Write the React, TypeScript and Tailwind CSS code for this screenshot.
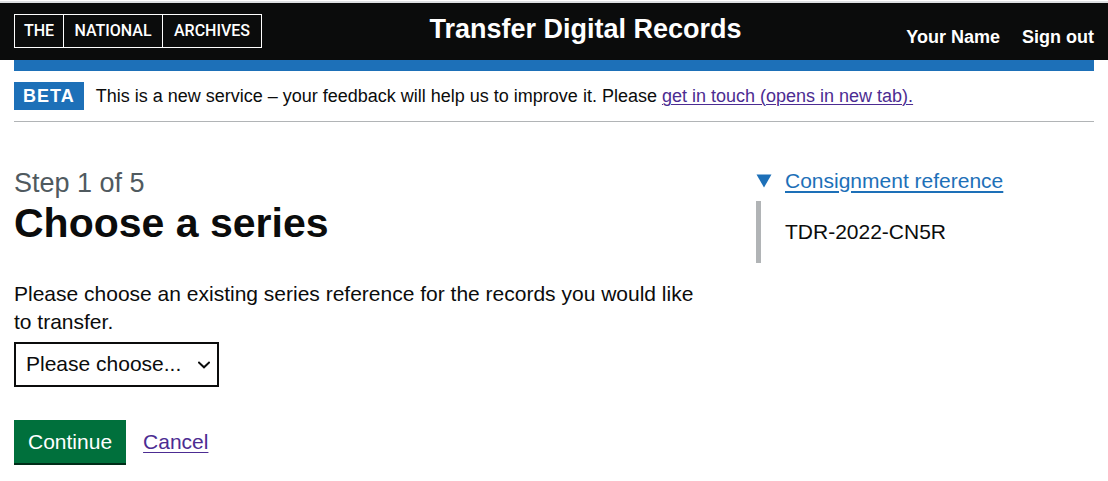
const logoWords = [
  { text: "THE", box: "w-[50px]" },
  { text: "NATIONAL", box: "w-[100px]" },
  { text: "ARCHIVES", box: "w-[100px]" },
];

function Logo() {
  return (
    <a
      href="#home"
      aria-label="The National Archives"
      className="flex h-[34px] font-['Roboto',sans-serif] text-[16px] leading-none font-medium text-white"
    >
      {logoWords.map((word) => (
        <span
          key={word.text}
          className={`${word.box} -mr-px flex items-center justify-center border border-white`}
        >
          {word.text}
        </span>
      ))}
    </a>
  );
}

function Header() {
  return (
    <header className="mt-px border-t-2 border-[#dee0e2] bg-[#0b0c0c] px-[14px] text-white">
      <div className="grid h-[57px] grid-cols-[5fr_8fr]">
        <div className="pt-[11px]">
          <Logo />
        </div>
        <div className="flex justify-between">
          <a href="#home" className="pt-[10px] text-[27px] leading-8 font-bold">
            Transfer Digital Records
          </a>
          <nav className="flex gap-[22px] pt-[22px] text-[18px] leading-6 font-bold">
            <a href="#account">Your Name</a>
            <a href="#sign-out">Sign out</a>
          </nav>
        </div>
      </div>
    </header>
  );
}

function PhaseBanner() {
  return (
    <div className="flex items-center gap-3 border-b border-[#b1b4b6] pt-[11px] pb-[11px]">
      <strong className="bg-[#1d70b8] px-[9px] text-[18px] leading-7 tracking-[1px] text-white">
        BETA
      </strong>
      <p className="text-[18px] leading-7">
        This is a new service – your feedback will help us to improve it. Please{" "}
        <a href="#contact" className="text-[#4c2c92] underline decoration-1 underline-offset-2">
          get in touch (opens in new tab).
        </a>
      </p>
    </div>
  );
}

function SeriesForm() {
  return (
    <form className="col-span-2" onSubmit={(e) => e.preventDefault()}>
      <h1 className="text-[41px] leading-[46px] font-bold">
        <span className="block text-[27px] leading-[34px] font-normal text-[#505a5f]">
          Step 1 of 5
        </span>
        Choose a series
      </h1>
      <label htmlFor="series" className="mt-[34px] block pr-4">
        Please choose an existing series reference for the records you would like to transfer.
      </label>
      <div className="relative mt-[6px] w-[205px]">
        <select
          id="series"
          className="block h-[45px] w-full appearance-none border-2 border-[#0b0c0c] bg-white pb-[2px] pl-[10px]"
        >
          <option>Please choose...</option>
        </select>
        <svg
          viewBox="0 0 12 8"
          className="pointer-events-none absolute top-[19px] right-[9px] h-2 w-3"
          fill="none"
          stroke="#0b0c0c"
          strokeWidth="2"
          aria-hidden="true"
        >
          <path d="M0.3 1 6 6.3 11.7 1" />
        </svg>
      </div>
      <div className="mt-[33px] flex items-baseline gap-[17px]">
        <button
          type="submit"
          className="h-[45px] border-b-2 border-[#002d18] bg-[#00703c] px-[14px] text-white"
        >
          Continue
        </button>
        <a href="#cancel" className="text-[#4c2c92] underline decoration-1 underline-offset-3">
          Cancel
        </a>
      </div>
    </form>
  );
}

function ConsignmentReference() {
  return (
    <details open className="pt-px">
      <summary className="flex cursor-pointer list-none items-center gap-[13px] text-[#1d70b8]">
        <svg viewBox="0 0 16 14" className="h-[14px] w-4" fill="currentColor" aria-hidden="true">
          <path d="M0.5 0.5h15L8 13.5z" />
        </svg>
        <span className="underline decoration-2 underline-offset-3">Consignment reference</span>
      </summary>
      <div className="mt-[6px] border-l-[5px] border-[#b1b4b6] py-[17px] pl-6">TDR-2022-CN5R</div>
    </details>
  );
}

export default function App() {
  return (
    <div className="bg-white font-['Liberation_Sans',Arial,sans-serif] text-[21px] leading-7 text-[#0b0c0c]">
      <Header />
      <div className="mx-[14px]">
        <div className="h-[11px] bg-[#1d70b8]" />
        <PhaseBanner />
        <main className="grid grid-cols-3 gap-[33px] pt-[44px]">
          <SeriesForm />
          <ConsignmentReference />
        </main>
      </div>
    </div>
  );
}
